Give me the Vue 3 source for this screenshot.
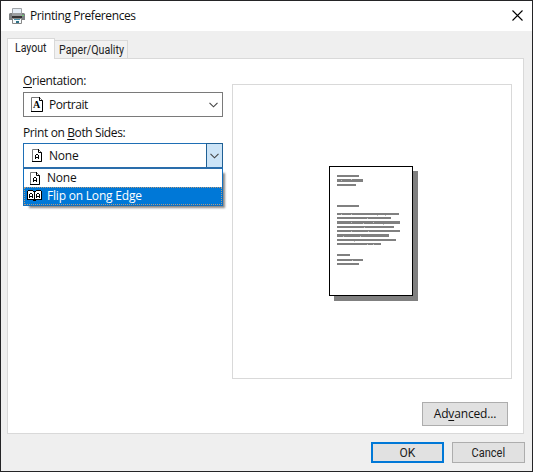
<script setup>
const lines = [
  [15, 22, 2], [19, 26, 3], [24, 19, 2], [45, 22, 2], [53, 62, 2], [57, 54, 2], [61, 63, 3], [66, 57, 2],
  [70, 63, 2], [74, 52, 3], [79, 59, 2], [83, 44, 2], [94, 13, 2], [99, 26, 2], [103, 22, 2],
].map(([y, w, h]) => ({ y: y - 6, w, h }))
const flecks = [[12, 14], [22, 13], [12, 48], [22, 48], [48, 49], [56, 49], [38, 52], [22, 56], [34, 57], [44, 56], [54, 58], [35, 61], [22, 65], [39, 65], [31, 70], [14, 70], [25, 75], [38, 78], [44, 78], [23, 94]]
</script>

<template>
  <div class="window">
    <header class="titlebar">
      <svg class="printer" width="16" height="16" viewBox="0 0 16 16">
        <path d="M3.5 .5h9V6h-9z" fill="#e6eef6" stroke="#a0a4a8" />
        <path d="M1 5h14l1 1v6H0V6z" fill="#7d8082" />
        <path d="M3 5h10v3H3z" fill="#9b9ea0" /><path d="M3 8h10v2H3z" fill="#333" />
        <path d="M3.5 10.5h9v5h-9z" fill="#f7fbfc" stroke="#888" />
        <path d="M5 11h6v1H5z" fill="#4992ae" /><path d="M7 13h3v2H7z" fill="#2f7187" />
        <path d="M13 7h2v1h-2z" fill="#69ce70" />
      </svg>
      <h1><span class="t title">Printing Preferences</span></h1>
      <svg class="close" width="11" height="11" viewBox="0 0 11 11"><path d="M.5.5l10 10M10.5.5l-10 10" stroke="#000" stroke-width="1.1" /></svg>
    </header>

    <nav class="tabs">
      <div class="tab active"><span class="t layout">Layout</span></div>
      <div class="tab"><span class="t paper">Paper/Quality</span></div>
    </nav>

    <main class="panel">
      <div class="content">
        <section class="options">
          <label class="label"><span class="t orient"><u>O</u>rientation:</span></label>
          <div class="combo">
            <svg class="pico" width="12" height="15" viewBox="0 0 12 15">
              <path d="M.5.5h8l3 3v11H.5z" fill="#fff" stroke="#777" /><path d="M0 14.5h11.5V3.5h-3V0" fill="none" stroke="#000" />
              <text x="5.6" y="11.4" text-anchor="middle" class="serif">A</text>
            </svg>
            <span class="t portrait">Portrait</span>
            <svg class="chev" width="9" height="6" viewBox="0 0 9 6"><path d="M.5.8l4 4 4-4" /></svg>
          </div>
          <label class="label second"><span class="t both">Print on <u>B</u>oth Sides:</span></label>
          <div class="combo open">
            <svg class="pico small" width="10" height="13" viewBox="0 0 10 13">
              <path d="M.5 12V.5h6l3 3v9H.5" fill="#fff" stroke="#777" /><path d="M0 12.5h9.5V3.5h-3V0" fill="none" stroke="#000" />
              <path d="M4 5h2v1h1v4H6V9H4v1H3V6h1zM4 6v2h2V6z" fill="#000" fill-rule="evenodd" />
            </svg>
            <span class="t none">None</span>
            <span class="drop"><svg class="chev" width="9" height="6" viewBox="0 0 9 6"><path d="M.5.8l4 4 4-4" /></svg></span>
            <div class="list">
              <div class="item">
                <svg class="one" width="10" height="13" viewBox="0 0 10 13">
                  <path d="M.5 12V.5h6l3 3v9H.5" fill="#fff" stroke="#777" /><path d="M0 12.5h9.5V3.5h-3V0" fill="none" stroke="#000" />
                  <path d="M4 5h2v1h1v4H6V9H4v1H3V6h1zM4 6v2h2V6z" fill="#000" fill-rule="evenodd" />
                </svg>
                <span class="t none">None</span>
              </div>
              <div class="item selected">
                <svg class="book" width="15" height="12" viewBox="0 0 15 12" shape-rendering="crispEdges">
                  <path d="M1 0h5v1h3V0h5v1h1v9H9v1H6v-1H0V1h1z" fill="#000" />
                  <path d="M1 1h5v1h1v7H1zM9 1h5v8H8V2h1z" fill="#fff" />
                  <path d="M3 3h2v1h1v4H5V7H3v1H2V4h1zM3 4v2h2V4zM10 3h2v1h1v4h-1V7h-2v1H9V4h1zM10 4v2h2V4z" fill="#000" fill-rule="evenodd" />
                </svg>
                <span class="t flip">Flip on Long Edge</span>
              </div>
            </div>
          </div>
        </section>
        <section class="preview">
          <svg width="89" height="135" viewBox="0 0 89 135" shape-rendering="crispEdges">
            <path d="M5 5h84v130H5z" fill="#808080" />
            <path d="M.5.5h83v129H.5z" fill="#fff" stroke="#000" />
            <rect v-for="l in lines" :key="l.y" x="8" :y="l.y" :width="l.w" :height="l.h" fill="#808080" />
            <rect v-for="(f, i) in flecks" :key="i" :x="f[0]" :y="f[1]" width="1" height="1" fill="#c4c4c4" />
          </svg>
        </section>
      </div>
      <button class="btn advanced"><span class="t adv">Ad<u>v</u>anced...</span></button>
    </main>

    <footer class="actions">
      <button class="btn ok"><span class="t okt">OK</span></button>
      <button class="btn cancel"><span class="t cant">Cancel</span></button>
    </footer>
  </div>
</template>

<style>
body { margin: 0; overflow: hidden; }
</style>

<style scoped>
* { box-sizing: border-box; }
.window { width: 533px; height: 472px; border: 1px solid #242426; background: #efefef; font: 12px/16px "Open Sans", sans-serif; color: #111; display: flex; flex-direction: column; }
.titlebar { height: 30px; flex: none; background: #fff; display: flex; align-items: center; padding: 0 9px 0 8px; }
.titlebar h1 { font: inherit; margin: 0 auto 0 5px; }
.close { margin-top: -2px; }
.t { white-space: nowrap; display: block; }
u { text-decoration: underline; text-underline-offset: 2px; text-decoration-thickness: 1px; text-decoration-skip-ink: none; }
.tabs { height: 27px; flex: none; display: flex; align-items: flex-end; padding-left: 6px; }
.tab { width: 73px; height: 18px; border: 1px solid #d9d9d9; border-bottom: 0; border-left: 0; background: #f1f1f1; padding-left: 4px; line-height: 18px; }
.tab.active { width: 48px; height: 21px; border-left: 1px solid #d9d9d9; background: #fff; padding-left: 7px; line-height: 19px; margin-bottom: -1px; z-index: 1; }
.panel { margin: 0 8px 0 6px; height: 376px; flex: none; background: #fff; border: 1px solid #d9d9d9; padding: 25px 11px 0 15px; display: flex; flex-direction: column; }
.content { display: flex; justify-content: space-between; height: 295px; }
.options { width: 200px; margin-top: -11px; }
.label { display: flex; height: 19px; }
.label.second { margin-top: 8px; height: 16px; }
.combo { height: 25px; border: 1px solid #7a7a7a; background: #fff; display: flex; align-items: center; padding: 0 4px 0 7px; position: relative; }
.label.second + .combo { margin-top: 2px; }
.combo.open { border-color: #1f6fb5; padding: 0 0 0 8px; }
.pico { margin-right: 6px; }
.pico.small { margin-right: 7px; }
.serif { font: bold 10px "Liberation Serif", serif; }
.chev { margin-left: auto; }
.chev path { fill: none; stroke: #444; stroke-width: 1.1; }
.drop { width: 17px; height: 25px; margin: -1px -1px -1px auto; border: 1px solid #1f6095; background: #cce4f7; display: flex; align-items: center; padding-right: 3px; }
.list { position: absolute; left: -1px; top: 23px; width: 200px; height: 39px; border: 1px solid #0f6fc0; border-top: 2px solid #2a6dab; background: #fff; box-shadow: 4px 4px 2px -2px #888; }
.item { height: 18px; display: flex; align-items: center; padding-left: 6px; }
.item.selected { background: #0078d7; color: #fff; outline: 1px dotted #b39a80; outline-offset: -1px; padding-left: 3px; }
.one { margin-right: 7px; }
.book { margin-right: 5px; }
.preview { width: 280px; border: 1px solid #d9d9d9; padding: 81px 0 0 96px; }
.preview svg { display: block; }
.btn { font: inherit; color: #111; padding: 0; margin: 0; background: #e1e1e1; border: 1px solid #adadad; display: flex; align-items: center; justify-content: center; }
.advanced { width: 86px; height: 24px; align-self: flex-end; margin: 23px 4px 0 0; }
.actions { display: flex; justify-content: flex-end; gap: 8px; padding: 8px 7px 0 0; }
.ok, .cancel { width: 73px; height: 21px; }
.ok { border: 2px solid #0078d7; }
.title { letter-spacing: -.4px; }
.orient { letter-spacing: -.35px; }
.both { letter-spacing: -.38px; }
.portrait { letter-spacing: -.45px; }
.none { letter-spacing: -.2px; }
.flip { letter-spacing: -.2px; }
.adv { letter-spacing: -.15px; }
.layout, .paper, .okt, .cant { font-family: Roboto, sans-serif; color: #222; }
.layout { transform: scaleX(.88); transform-origin: left; }
.paper { transform: scaleX(.89); transform-origin: left; }
.cant { transform: scaleX(.92); }
</style>
